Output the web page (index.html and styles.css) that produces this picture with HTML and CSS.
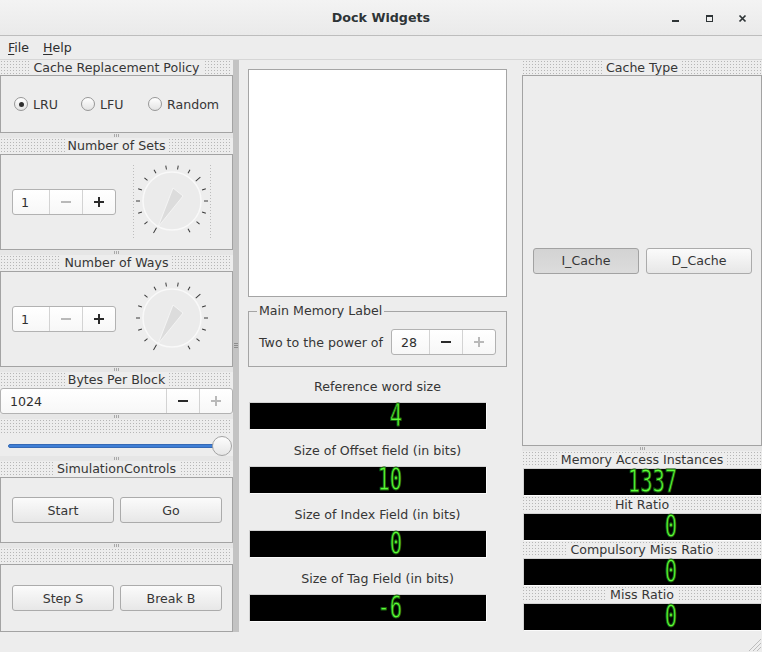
FILE: index.html
```html
<!DOCTYPE html>
<html lang="en">
<head>
<meta charset="utf-8">
<title>Dock Widgets</title>
<link rel="stylesheet" href="styles.css">
</head>
<body>
<div class="window">
  <header class="titlebar">
    <div></div>
    <div class="title">Dock Widgets</div>
    <svg class="wbtns" width="100" height="35" viewBox="0 0 100 35">
      <rect x="10" y="20" width="7" height="2" fill="#2e3436"/>
      <rect x="44.5" y="15.5" width="6" height="6" fill="none" stroke="#2e3436" stroke-width="1"/>
      <rect x="44" y="15" width="7" height="2" fill="#2e3436"/>
      <path d="M77.5 15.5 L83.5 21.5 M83.5 15.5 L77.5 21.5" stroke="#2e3436" stroke-width="1.7"/>
    </svg>
  </header>
  <nav class="menubar"><span><u>F</u>ile</span><span><u>H</u>elp</span></nav>
  <div class="main">
    <aside class="leftdock">
      <div class="dtitle first"><span>Cache Replacement Policy</span></div>
      <div class="frame policy">
        <label class="radio"><i class="on"></i>LRU</label>
        <label class="radio"><i></i>LFU</label>
        <label class="radio"><i></i>Random</label>
      </div>
      <div class="sep"><b></b></div>

      <div class="dtitle"><span>Number of Sets</span></div>
      <div class="frame dialbox">
        <div class="spin small"><span class="val">1</span><span class="sb minus off"></span><span class="sb plus"></span></div>
        <svg class="dial" width="80" height="76" viewBox="0 0 80 76">
          <g stroke="#bdbdbd" stroke-width="1" stroke-dasharray="1 2">
            <line x1="1.5" y1="1" x2="1.5" y2="75"/>
            <line x1="78.5" y1="1" x2="78.5" y2="75"/>
          </g>
          <circle cx="40" cy="37" r="29" fill="#ebebeb" stroke="#f9f9f9" stroke-width="1.5"/>
          <polygon points="41,24 51,32 26,63" fill="#dcdcdc" stroke="#f7f7f7" stroke-width="0.8"/>
          <g stroke="#3a3a3a" stroke-width="1">
            <line x1="40" y1="0" x2="40" y2="6" transform="rotate(-150 40 37)"/>
            <line x1="40" y1="1" x2="40" y2="5" transform="rotate(-130 40 37)"/>
            <line x1="40" y1="1" x2="40" y2="5" transform="rotate(-110 40 37)"/>
            <line x1="40" y1="1" x2="40" y2="5" transform="rotate(-90 40 37)"/>
            <line x1="40" y1="1" x2="40" y2="5" transform="rotate(-70 40 37)"/>
            <line x1="40" y1="1" x2="40" y2="5" transform="rotate(-50 40 37)"/>
            <line x1="40" y1="1" x2="40" y2="5" transform="rotate(-30 40 37)"/>
            <line x1="40" y1="1" x2="40" y2="5" transform="rotate(-10 40 37)"/>
            <line x1="40" y1="1" x2="40" y2="5" transform="rotate(10 40 37)"/>
            <line x1="40" y1="1" x2="40" y2="5" transform="rotate(30 40 37)"/>
            <line x1="40" y1="0" x2="40" y2="6" transform="rotate(50 40 37)"/>
            <line x1="40" y1="1" x2="40" y2="5" transform="rotate(70 40 37)"/>
            <line x1="40" y1="1" x2="40" y2="5" transform="rotate(90 40 37)"/>
            <line x1="40" y1="1" x2="40" y2="5" transform="rotate(110 40 37)"/>
            <line x1="40" y1="1" x2="40" y2="5" transform="rotate(130 40 37)"/>
            <line x1="40" y1="1" x2="40" y2="5" transform="rotate(150 40 37)"/>
          </g>
        </svg>
      </div>
      <div class="sep"><b></b></div>

      <div class="dtitle"><span>Number of Ways</span></div>
      <div class="frame dialbox">
        <div class="spin small"><span class="val">1</span><span class="sb minus off"></span><span class="sb plus"></span></div>
        <svg class="dial" width="80" height="76" viewBox="0 0 80 76">
          <circle cx="40" cy="37" r="29" fill="#ebebeb" stroke="#f9f9f9" stroke-width="1.5"/>
          <polygon points="41,24 51,32 26,63" fill="#dcdcdc" stroke="#f7f7f7" stroke-width="0.8"/>
          <g stroke="#3a3a3a" stroke-width="1">
            <line x1="40" y1="0" x2="40" y2="6" transform="rotate(-150 40 37)"/>
            <line x1="40" y1="1" x2="40" y2="5" transform="rotate(-130 40 37)"/>
            <line x1="40" y1="1" x2="40" y2="5" transform="rotate(-110 40 37)"/>
            <line x1="40" y1="1" x2="40" y2="5" transform="rotate(-90 40 37)"/>
            <line x1="40" y1="1" x2="40" y2="5" transform="rotate(-70 40 37)"/>
            <line x1="40" y1="1" x2="40" y2="5" transform="rotate(-50 40 37)"/>
            <line x1="40" y1="1" x2="40" y2="5" transform="rotate(-30 40 37)"/>
            <line x1="40" y1="1" x2="40" y2="5" transform="rotate(-10 40 37)"/>
            <line x1="40" y1="1" x2="40" y2="5" transform="rotate(10 40 37)"/>
            <line x1="40" y1="1" x2="40" y2="5" transform="rotate(30 40 37)"/>
            <line x1="40" y1="0" x2="40" y2="6" transform="rotate(50 40 37)"/>
            <line x1="40" y1="1" x2="40" y2="5" transform="rotate(70 40 37)"/>
            <line x1="40" y1="1" x2="40" y2="5" transform="rotate(90 40 37)"/>
            <line x1="40" y1="1" x2="40" y2="5" transform="rotate(110 40 37)"/>
            <line x1="40" y1="1" x2="40" y2="5" transform="rotate(130 40 37)"/>
            <line x1="40" y1="1" x2="40" y2="5" transform="rotate(150 40 37)"/>
          </g>
        </svg>
      </div>
      <div class="sep"><b></b></div>

      <div class="dtitle"><span>Bytes Per Block</span></div>
      <div class="spin wide"><span class="val">1024</span><span class="sb minus"></span><span class="sb plus off"></span></div>
      <div class="sep"><b></b></div>

      <div class="dtitle"></div>
      <div class="slider"><span class="groove"></span><span class="handle"></span></div>
      <div class="sep"><b></b></div>

      <div class="dtitle"><span>SimulationControls</span></div>
      <div class="frame btnrow sim">
        <button class="btn">Start</button><button class="btn">Go</button>
      </div>
      <div class="sep"><b></b></div>

      <div class="dtitle"></div>
      <div class="frame btnrow step">
        <button class="btn">Step S</button><button class="btn">Break B</button>
      </div>
    </aside>

    <div class="vsplit"><b></b></div>

    <main class="center">
      <div class="textedit"></div>
      <fieldset class="group">
        <legend>Main Memory Label</legend>
        <div class="grow">
          <span class="glabel">Two to the power of</span>
          <div class="spin mem"><span class="val">28</span><span class="sb minus"></span><span class="sb plus off"></span></div>
        </div>
      </fieldset>
      <div class="clabel">Reference word size</div>
      <div class="lcd"><span>4</span></div>
      <div class="clabel">Size of Offset field (in bits)</div>
      <div class="lcd"><span>10</span></div>
      <div class="clabel">Size of Index Field (in bits)</div>
      <div class="lcd"><span>0</span></div>
      <div class="clabel">Size of Tag Field (in bits)</div>
      <div class="lcd"><span>-6</span></div>
    </main>

    <aside class="rightdock">
      <div class="dtitle first"><span>Cache Type</span></div>
      <div class="frame btnrow cachetype">
        <button class="btn pressed">I_Cache</button><button class="btn">D_Cache</button>
      </div>
      <div class="sep"><b></b></div>
      <div class="dtitle tall"><span>Memory Access Instances</span></div>
      <div class="lcd"><span>1337</span></div>
      <div class="dtitle tall"><span>Hit Ratio</span></div>
      <div class="lcd"><span>0</span></div>
      <div class="dtitle tall"><span>Compulsory Miss Ratio</span></div>
      <div class="lcd"><span>0</span></div>
      <div class="dtitle tall"><span>Miss Ratio</span></div>
      <div class="lcd"><span>0</span></div>
    </aside>
  </div>
  <footer class="statusbar">
    <svg class="grip" width="16" height="16" viewBox="0 0 16 16">
      <path d="M15 3 L3 15 M15 7 L7 15 M15 11 L11 15" stroke="#bcbcbc" stroke-width="1"/>
    </svg>
  </footer>
</div>
</body>
</html>
```

FILE: styles.css
```css
* { box-sizing: border-box; }
html, body { margin: 0; padding: 0; }
body {
  width: 762px;
  height: 652px;
  overflow: hidden;
  background: #ededed;
  font-family: "DejaVu Sans", "Liberation Sans", sans-serif;
  font-size: 12.6px;
  color: #363636;
}
.window { display: flex; flex-direction: column; height: 652px; }

/* title bar */
.titlebar {
  height: 36px;
  flex: none;
  display: grid;
  grid-template-columns: 1fr auto 1fr;
  align-items: center;
  background: linear-gradient(#f3f3f3, #eaeaea);
  border-bottom: 1px solid #bdbdbd;
}
.title { font-weight: bold; font-size: 12.7px; color: #2e3436; }
.wbtns { justify-self: end; align-self: start; }

/* menu */
.menubar {
  height: 24px;
  flex: none;
  display: flex;
  align-items: center;
  gap: 14px;
  padding-left: 8px;
  border-bottom: 1px solid #d6d6d6;
  color: #2e2e2e;
}
.menubar u { text-decoration-thickness: 1px; text-underline-offset: 2px; }

.main { height: 572px; flex: none; display: flex; }

/* docks */
.leftdock { width: 233px; flex: none; display: flex; flex-direction: column; }
.rightdock { width: 240px; flex: none; display: flex; flex-direction: column; }
.vsplit {
  width: 6px;
  flex: none;
  background: #c3c3c3;
  display: flex;
  flex-direction: column;
  align-items: center;
  padding-top: 283px;
}
.vsplit b {
  width: 4px;
  height: 5px;
  background: repeating-linear-gradient(to bottom, #8c8c8c 0 1px, transparent 1px 2px);
}

.dtitle {
  height: 16px;
  flex: none;
  display: flex;
  justify-content: center;
  align-items: center;
  background-image: conic-gradient(from 270deg at 1px 1px, #b6b6b6 25%, transparent 0);
  background-size: 3px 3px;
  background-position: 1px 1px;
  background-clip: content-box;
  padding: 1px;
}
.dtitle.first { height: 15px; }
.dtitle.tall { height: 17px; }
.dtitle span { background: #ededed; padding: 0 3px; line-height: 14px; }

.sep {
  height: 5px;
  flex: none;
  display: flex;
  justify-content: center;
  align-items: center;
  background: #e6e6e6;
}
.sep b {
  width: 5px;
  height: 3px;
  background: repeating-linear-gradient(to right, #a8a8a8 0 1px, transparent 1px 2px);
}

.frame { border: 1px solid #a3a3a3; flex: none; }

.policy {
  height: 58px;
  display: grid;
  grid-template-columns: 67px 67px auto;
  align-items: center;
  padding-left: 13px;
}
.radio { display: flex; align-items: center; gap: 5px; }
.radio i {
  width: 14px;
  height: 14px;
  border-radius: 50%;
  border: 1px solid #979797;
  background: linear-gradient(#ffffff, #e3e3e3);
  display: flex;
  align-items: center;
  justify-content: center;
}
.radio i.on::after {
  content: "";
  width: 5px;
  height: 5px;
  border-radius: 50%;
  background: #2e2e2e;
}

.dialbox {
  height: 96px;
  display: flex;
  align-items: center;
  padding-left: 11px;
  gap: 16px;
}

/* spin boxes */
.spin {
  height: 26px;
  flex: none;
  display: flex;
  border: 1px solid #b2b2b2;
  border-radius: 3px;
  background: linear-gradient(#ffffff, #f7f7f7);
}
.spin.small { width: 104px; }
.spin.wide { width: 233px; }
.spin.mem { width: 105px; }
.spin .val { flex: 1; display: flex; align-items: center; padding-left: 9px; color: #2e2e2e; }
.spin.small .val { padding-left: 8px; }
.sb {
  width: 33px;
  flex: none;
  border-left: 1px solid #d3d3d3;
  display: flex;
  align-items: center;
  justify-content: center;
  position: relative;
  color: #2a2a2a;
}
.sb.off { color: #b9b9b9; }
.sb::before { content: ""; width: 10px; height: 2px; background: currentColor; }
.sb.plus::after {
  content: "";
  position: absolute;
  width: 2px;
  height: 10px;
  background: currentColor;
}

/* slider */
.slider {
  height: 21px;
  flex: none;
  display: flex;
  align-items: center;
  padding: 0 1px 0 8px;
}
.groove {
  flex: 1;
  height: 4px;
  border-radius: 2px;
  background: #3f7fd6;
  border: 1px solid #3569b5;
  margin-right: -12px;
}
.handle {
  width: 20px;
  height: 20px;
  flex: none;
  border-radius: 50%;
  border: 1px solid #a3a3a3;
  background: linear-gradient(#fdfdfd, #e6e6e6);
  position: relative;
  z-index: 1;
}

/* buttons */
.btnrow {
  display: grid;
  grid-template-columns: 1fr 1fr;
  align-items: center;
  gap: 6px;
  padding: 0 10px 0 11px;
}
.sim { height: 66px; }
.step { height: 68px; }
.cachetype { height: 371px; gap: 7px; padding: 0 9px 0 10px; }
.btn {
  height: 26px;
  font: inherit;
  color: #363636;
  border: 1px solid #ababab;
  border-radius: 3px;
  background: linear-gradient(#fbfbfb, #e7e7e7);
  padding: 0;
}
.btn.pressed { background: linear-gradient(#d3d3d3, #dcdcdc); border-color: #a2a2a2; }

/* center */
.center {
  width: 277px;
  flex: none;
  padding: 9px 9px 0 9px;
  display: flex;
  flex-direction: column;
  margin-right: 6px;
}
.textedit { height: 228px; flex: none; background: #ffffff; border: 1px solid #a5a5a5; }
.group {
  margin: 7px 0 0 0;
  padding: 11px 10px 11px 10px;
  border: 1px solid #a5a5a5;
  min-inline-size: 0;
}
.group legend { padding: 0 2px; margin-left: -2px; line-height: 14px; color: #363636; }
.grow { display: flex; align-items: center; justify-content: space-between; }
.glabel { white-space: nowrap; flex: none; }
.clabel { margin-top: 13px; line-height: 14px; text-align: center; white-space: nowrap; }
.clabel ~ .clabel { margin-top: 14px; }
.center .lcd { margin: 8px 0 0 1px; width: 238px; }

/* LCD */
.lcd {
  height: 28px;
  flex: none;
  background: #000000;
  border: 1px solid;
  border-color: #d2d2d2 #fbfbfb #fbfbfb #d2d2d2;
  display: flex;
  justify-content: flex-end;
  align-items: center;
  padding-right: 84px;
}
.rightdock .lcd { margin-left: 1px; }
.lcd span {
  display: inline-block;
  height: 26px;
  font-family: "DejaVu Sans Mono", monospace;
  font-size: 25px;
  line-height: 26px;
  color: #5cff38;
  -webkit-text-stroke: 0.8px #185f0c;
  transform: scale(0.82, 1.25);
  transform-origin: right center;
}

.statusbar { flex: 1; display: flex; justify-content: flex-end; align-items: flex-end; }
.grip { display: block; }
```
